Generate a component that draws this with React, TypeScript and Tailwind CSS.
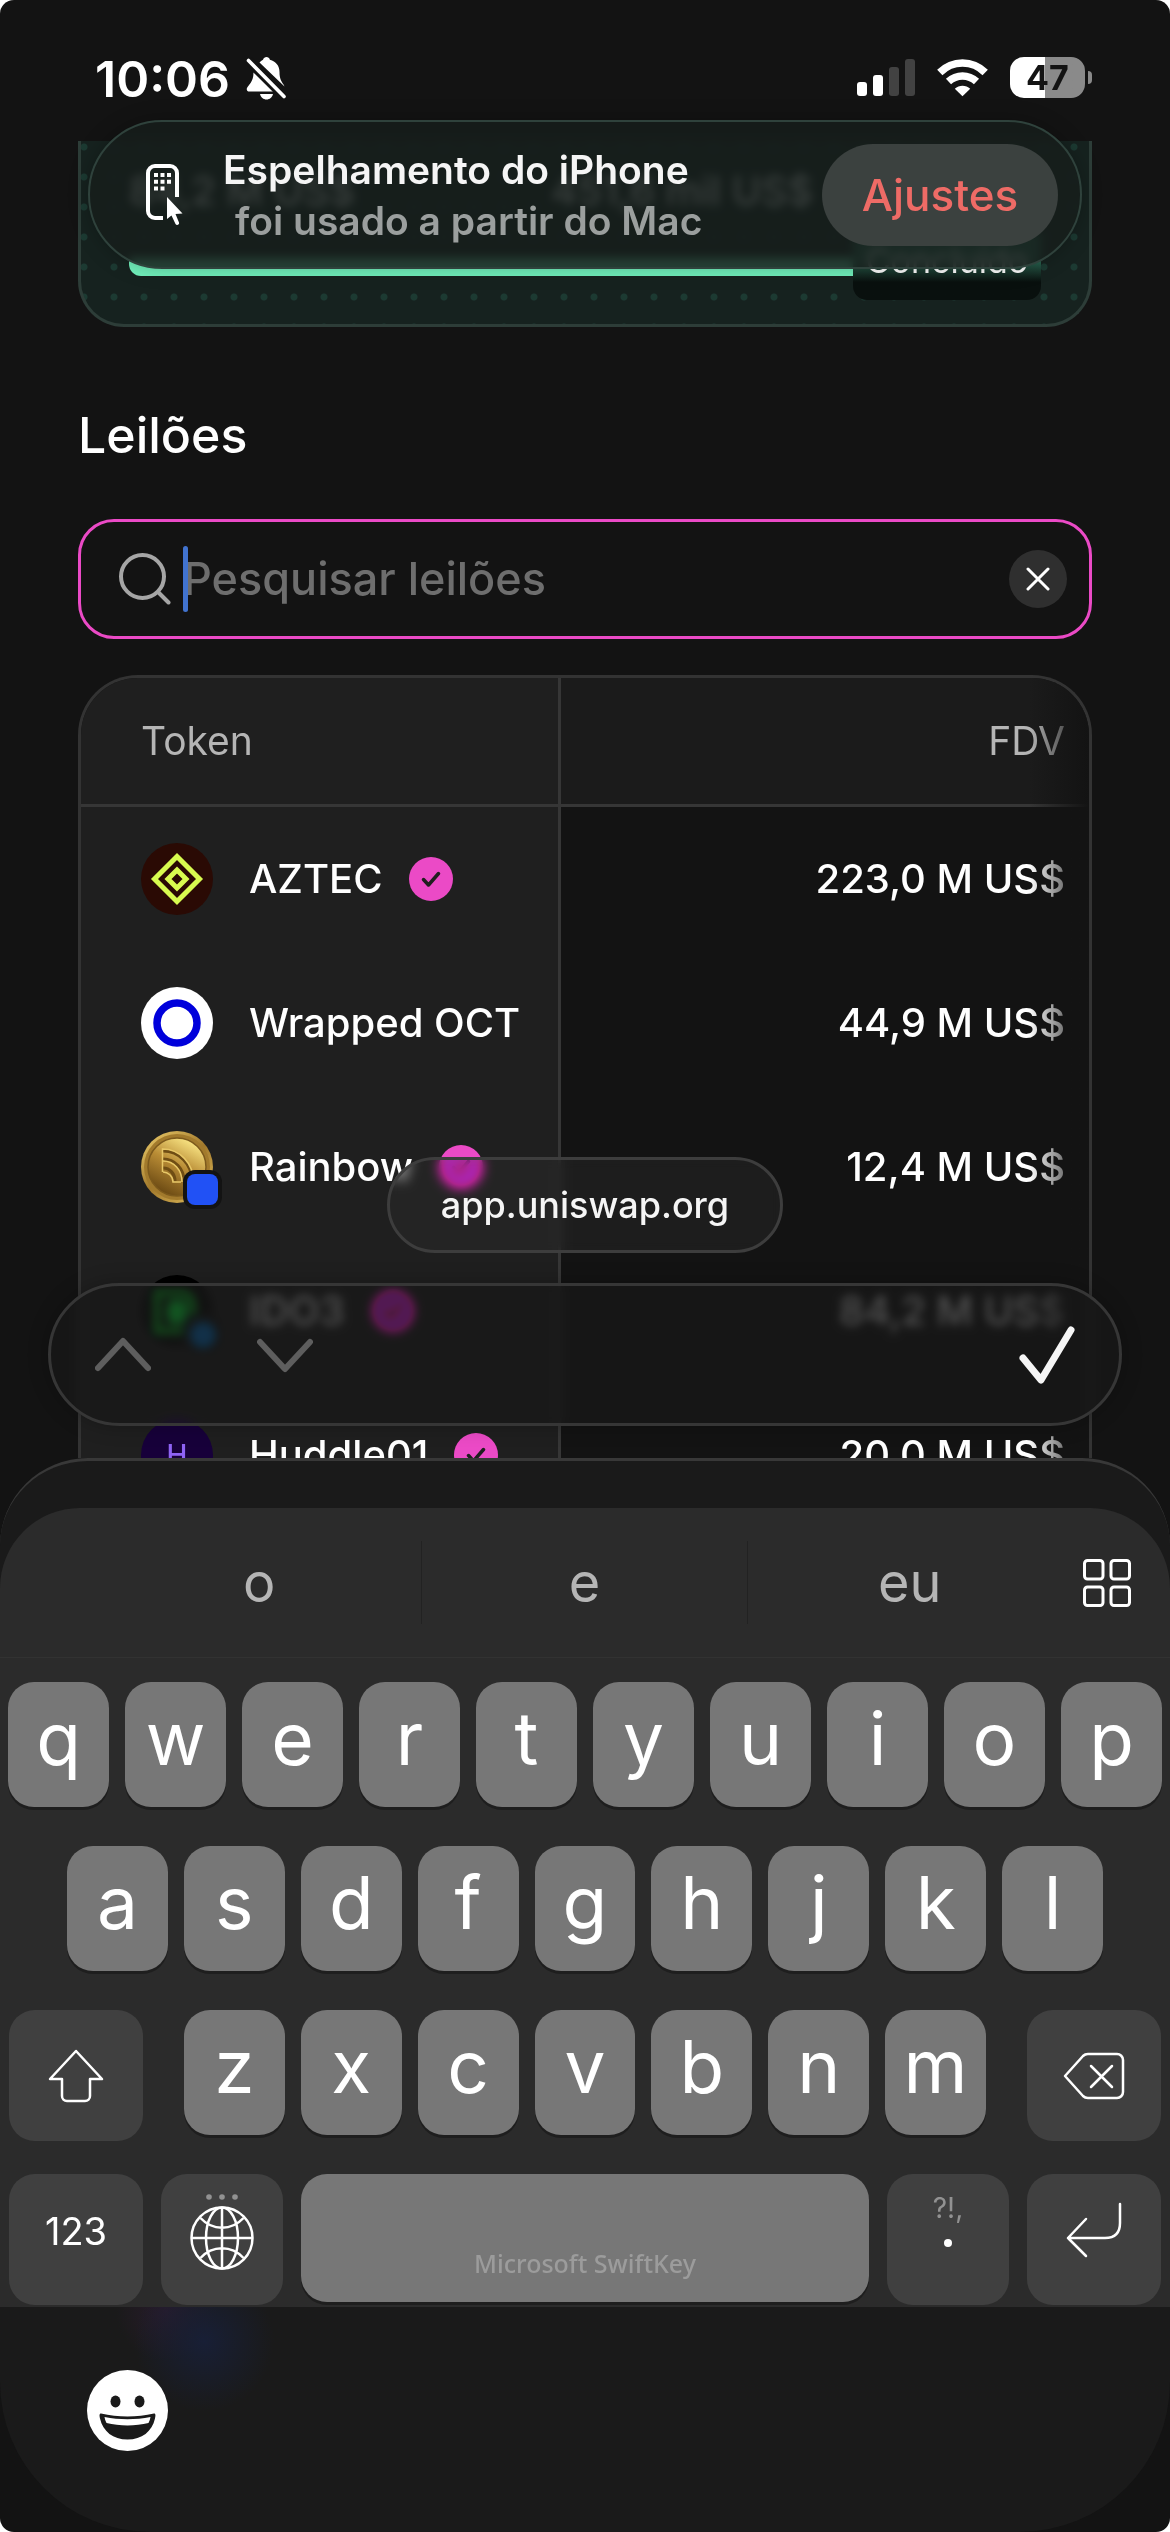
import React from "react";

type Token = {
  name: string;
  fdv: string;
  verified: boolean;
  logo: React.ReactNode;
};

const AztecLogo = () => (
  <svg viewBox="0 0 72 72" className="size-18">
    <circle cx="36" cy="36" r="36" fill="#2a0a04" />
    <path d="M36 13.5 58.5 36 36 58.500 13.500 36Z" fill="none" stroke="#d8fb4f" strokeWidth="5" />
    <path d="M36 27 45 36 36 45 27 36Z" fill="none" stroke="#d8fb4f" strokeWidth="5" />
  </svg>
);

const OctLogo = () => (
  <svg viewBox="0 0 72 72" className="size-18">
    <circle cx="36" cy="36" r="36" fill="#fff" />
    <circle cx="36" cy="36" r="20" fill="none" stroke="#0000db" strokeWidth="7.5" />
  </svg>
);

const RainbowLogo = () => (
  <svg viewBox="0 0 72 72" className="size-18 overflow-visible">
    <defs>
      <linearGradient id="coin" x1="0.75" y1="0.1" x2="0.3" y2="0.95">
        <stop offset="0" stopColor="#f3dc7c" />
        <stop offset="0.45" stopColor="#b98c35" />
        <stop offset="1" stopColor="#6e4c14" />
      </linearGradient>
      <linearGradient id="rim" x1="0.1" y1="0" x2="0.9" y2="1">
        <stop offset="0" stopColor="#e9c968" />
        <stop offset="0.5" stopColor="#a1782b" />
        <stop offset="1" stopColor="#e0bd5c" />
      </linearGradient>
    </defs>
    <circle cx="36" cy="36" r="36" fill="url(#rim)" />
    <circle cx="36" cy="36" r="33" fill="#a27a2c" />
    <circle cx="36" cy="36" r="29" fill="url(#coin)" stroke="#7d5a1c" strokeWidth="1.5" />
    <g fill="none" strokeWidth="3" stroke="#6f4d14">
      <path d="M22 20c16 0 29 13 29 30" />
      <path d="M22 28c12 0 21 10 21 22" />
      <path d="M22 37c7 0 12 6 12 13" />
    </g>
    <g fill="none" strokeWidth="1.500" stroke="#e8c868">
      <path d="M21.500 41V18c17 0 31 14 31 33" />
      <path d="M22 30c11 0 19 9 19 21" />
      <path d="M22 41c5 0 10 4 10 10h8" />
    </g>
    <rect x="42" y="39" width="39" height="39" rx="12" fill="#131313" />
    <rect x="46" y="43" width="31" height="31" rx="8" fill="#2151f5" />
  </svg>
);

const Ido3Logo = () => (
  <svg viewBox="0 0 72 72" className="size-18 overflow-visible">
    <circle cx="36" cy="36" r="36" fill="#000" />
    <path d="M16 18h22c12 0 14 6 14 18s-4 20-14 20H16Z" fill="none" stroke="#2fc463" strokeWidth="6" />
    <rect x="26" y="25" width="20" height="24" rx="6" fill="#3fdc78" />
    <rect x="42" y="39" width="39" height="39" rx="12" fill="#131313" />
    <circle cx="62" cy="60" r="13" fill="#2e6f9e" />
  </svg>
);

const HuddleLogo = () => (
  <div className="flex size-18 items-center justify-center rounded-full bg-[#17003a] text-[28px] font-medium text-[#8f63f5]">
    H
  </div>
);

const tokens: Token[] = [
  { name: "AZTEC", fdv: "223,0 M US$", verified: true, logo: <AztecLogo /> },
  { name: "Wrapped OCT", fdv: "44,9 M US$", verified: false, logo: <OctLogo /> },
  { name: "Rainbow", fdv: "12,4 M US$", verified: true, logo: <RainbowLogo /> },
  { name: "IDO3", fdv: "84,2 M US$", verified: true, logo: <Ido3Logo /> },
  { name: "Huddle01", fdv: "20,0 M US$", verified: true, logo: <HuddleLogo /> },
];

const VerifiedBadge = () => (
  <svg viewBox="0 0 44 44" className="size-11 shrink-0" role="img" aria-label="Verificado">
    <circle cx="22" cy="22" r="22" fill="#eb4ac6" />
    <path d="m14.500 22.500 5 5.500 10-11.500" fill="none" stroke="#1f1f1f" strokeWidth="3.500" strokeLinecap="round" strokeLinejoin="round" />
  </svg>
);

function StatusBar() {
  return (
    <header className="flex h-[141px] shrink-0 items-start justify-between pt-[57px] pr-[78px] pl-[95px]">
      <div className="flex items-center gap-4">
        <time className="text-[50px] leading-[42px] font-semibold">10:06</time>
        <svg viewBox="0 0 40 44" className="h-11 w-10" fill="#fff" aria-label="Silencioso">
          <path d="M13.500 5.500C15 3.800 16 3.300 17 2.800 17.500 1 19 0 20.500 0s3 1 3.400 2.800c6 1.500 9.600 6.200 9.600 12.200 0 7 2 9.500 4 12.500l1 2Z" />
          <path d="M7.500 15.500 27 34.500H3.500C1.500 34.500.5 33.500.8 31.500 2 28 7.500 25.500 7.500 15.500Z" />
          <path d="M14 37h13c-.8 3.300-3.300 5.500-6.500 5.500S14.800 40.300 14 37Z" />
          <path d="M2.500 3.500 38 39.500" stroke="#131313" strokeWidth="9" />
          <path d="M2.500 3.500 38 39.500" stroke="#fff" strokeWidth="3.600" strokeLinecap="round" />
        </svg>
      </div>
      <div className="flex items-center gap-[22px]">
        <svg viewBox="0 0 58 38" className="h-[38px] w-[58px]" aria-label="Sinal">
          <rect x="0" y="23" width="10" height="14" rx="3" fill="#fff" />
          <rect x="16" y="16" width="10" height="21" rx="3" fill="#fff" />
          <rect x="32" y="8" width="10" height="29" rx="3" fill="#424242" />
          <rect x="48" y="0" width="10" height="37" rx="3" fill="#424242" />
        </svg>
        <svg viewBox="0 0 51 38" className="h-[38px] w-[51px]" fill="none" stroke="#fff" strokeWidth="7.500" aria-label="Wi-Fi">
          <path d="M2.800 13.500C15.500.8 35.500.8 48.200 13.500" />
          <path d="M11.500 22.500c8-7.500 20-7.500 28 0" />
          <path d="M25.500 37.300 17.800 29.800c4.200-4 11.200-4 15.400 0Z" fill="#fff" stroke="none" />
        </svg>
        <div className="flex items-center gap-[3px]">
          <div className="flex h-[41px] w-[75px] items-center justify-center rounded-[14px] bg-linear-to-r from-white from-47% to-[#8a8a8a] to-47% text-[34px] font-bold text-[#131313]">
            47
          </div>
          <div className="h-[13px] w-1 rounded-r-full bg-[#8a8a8a]" />
        </div>
      </div>
    </header>
  );
}

function Banner() {
  return (
    <aside className="absolute inset-x-[88px] top-[120px] flex h-[149px] items-center rounded-full border-2 border-[#2f423c] bg-[#161d1b]/85 pr-[22px] pl-14 shadow-[0_0_20px_rgba(0,0,0,0.25)] backdrop-blur-[5px]">
      <svg viewBox="0 0 38 62" className="h-[62px] w-[38px]" fill="none" aria-hidden="true">
        <path d="M31 33V9a7 7 0 0 0-7-7H9a7 7 0 0 0-7 7v38a7 7 0 0 0 7 7h8" stroke="#fff" strokeWidth="4" />
        <g fill="#fff">
          <path d="M8 9h4v4H8zM14.500 9h4v4h-4zM21 9h4v4h-4zM8 15.700h4v4H8zM14.500 15.700h4v4h-4zM21 15.700h4v4h-4zM8 22.400h4v4H8zM14.500 22.400h4v4h-4z" />
          <path d="M21 33v22l4.500-3.500 4 8.500c1 2 4.300.8 3.500-1.500l-3.500-8.500 7-.5Z" />
        </g>
      </svg>
      <div className="ml-[39px] flex-1 text-[39px] leading-[51px] font-semibold whitespace-nowrap">
        <p className="text-[#f5f5f5]">Espelhamento do iPhone</p>
        <p className="pl-3 text-[#9b9f9e]">foi usado a partir do Mac</p>
      </div>
      <button type="button" className="h-[102px] w-[236px] shrink-0 rounded-full bg-[#3b413f] text-[44px] font-medium text-[#ee6b66]">
        Ajustes
      </button>
    </aside>
  );
}

function FeaturedCard() {
  return (
    <section className="relative h-[186px] overflow-hidden rounded-b-[46px] border-x-3 border-b-3 border-[#2d3d38] bg-[#16221f] bg-[radial-gradient(circle,#1c3a32_3px,transparent_4px)] bg-[length:30px_30px] bg-[position:-12px_-9px] px-12">
      <div className="flex h-[100px] items-center text-[40px] font-medium text-white">
        <span className="w-[422px]">84,2 M US$</span>
        <span>451,6 mil US$</span>
      </div>
      <div className="mt-[17px] h-[18px] rounded-bl-xl bg-[#72f2bd]" />
      <div className="absolute right-12 bottom-6 flex h-[72px] w-[188px] items-center justify-center rounded-[14px] bg-linear-to-b from-[#2a6a55] from-45% to-[#09100e] to-75% pb-2 text-[34px] text-white">
        Concluído
      </div>
    </section>
  );
}

function SearchBox() {
  return (
    <div className="relative mt-[54px] flex h-[120px] items-center rounded-[36px] border-3 border-[#eb4ac6] pr-[22px] pl-[38px]">
      <svg viewBox="0 0 52 52" className="size-[52px] shrink-0" fill="none" stroke="#a6a6a6" strokeWidth="4" strokeLinecap="round" aria-hidden="true">
        <circle cx="23.500" cy="23.500" r="21.500" />
        <path d="m39.500 39.500 10 10" />
      </svg>
      <label htmlFor="busca" className="sr-only">Pesquisar leilões</label>
      <input
        id="busca"
        type="text"
        placeholder="Pesquisar leilões"
        className="ml-3 min-w-0 flex-1 bg-transparent text-[45px] font-medium text-white outline-none placeholder:text-[#6e6e6e]"
      />
      <span className="absolute left-[102px] h-[66px] w-[5px] rounded-full bg-[#4173cf]" />
      <button type="button" aria-label="Limpar" className="flex size-[58px] items-center justify-center rounded-full bg-[#2f2f2f]">
        <svg viewBox="0 0 24 24" className="size-6" stroke="#fff" strokeWidth="3" strokeLinecap="round">
          <path d="m2 2 20 20M22 2 2 22" />
        </svg>
      </button>
    </div>
  );
}

function AuctionTable() {
  return (
    <div className="relative mt-9 overflow-hidden rounded-t-[60px] border-3 border-b-0 border-[#333333]">
      <table className="w-full border-separate border-spacing-0 text-[40px]">
        <thead>
          <tr className="h-[129px] text-[39px] text-[#b5b5b5]">
            <th scope="col" className="w-[480px] border-r-3 border-b-3 border-[#363636] bg-[#1f1f1f] pl-15 text-left font-normal">
              Token
            </th>
            <th scope="col" className="border-b-3 border-[#363636] bg-[#1b1b1b] pr-6 text-right font-normal">
              FDV
            </th>
          </tr>
        </thead>
        <tbody>
          {tokens.map((t) => (
            <tr key={t.name} className="h-36 font-medium text-white">
              <td className="border-r-3 border-[#363636] bg-[#1f1f1f] pl-15">
                <div className="flex items-center">
                  {t.logo}
                  <span className="mr-[26px] ml-9 whitespace-nowrap">{t.name}</span>
                  {t.verified && <VerifiedBadge />}
                </div>
              </td>
              <td className="pr-6 text-right">{t.fdv}</td>
            </tr>
          ))}
        </tbody>
      </table>
      <div className="pointer-events-none absolute inset-y-0 right-0 w-15 bg-linear-to-r from-transparent to-[#131313]" />
    </div>
  );
}

function FormAssistant() {
  return (
    <>
      <div className="absolute bottom-[205px] left-1/2 flex h-24 w-[396px] -translate-x-1/2 items-center justify-center rounded-full border-3 border-[#3d3d3d] bg-[#2d2d2d]/40 text-[36px] text-[#f5f5f5] backdrop-blur-[6px] backdrop-saturate-200">
        <a href="#app" className="font-medium">app.uniswap.org</a>
      </div>
      <div className="absolute inset-x-12 bottom-8 flex h-[143px] items-center rounded-full border-3 border-[#363636] bg-[#181818]/75 px-11 shadow-[0_0_20px_rgba(0,0,0,0.25)] backdrop-blur-[5px] backdrop-saturate-200">
        <button type="button" aria-label="Campo anterior">
          <svg viewBox="0 0 56 36" className="h-9 w-14" fill="none" stroke="#5e5e5e" strokeWidth="6" strokeLinecap="round" strokeLinejoin="round">
            <path d="M3 31 28 4l25 27" />
          </svg>
        </button>
        <button type="button" aria-label="Próximo campo" className="ml-[106px]">
          <svg viewBox="0 0 56 36" className="h-9 w-14" fill="none" stroke="#5e5e5e" strokeWidth="6" strokeLinecap="round" strokeLinejoin="round">
            <path d="m3 5 25 27L53 5" />
          </svg>
        </button>
        <button type="button" aria-label="Concluir" className="ml-auto">
          <svg viewBox="0 0 56 58" className="h-[58px] w-14" fill="none" stroke="#f5f5f5" strokeWidth="7" strokeLinecap="round" strokeLinejoin="round">
            <path d="m4 32 18 22L52 4" />
          </svg>
        </button>
      </div>
    </>
  );
}

const Key = ({ children }: { children: string }) => (
  <button
    type="button"
    className="flex h-[125px] min-w-0 flex-1 items-center justify-center rounded-[26px] bg-[#777777] pb-3 text-[73px] leading-none text-white shadow-[0_3px_0_#1e1e1e]"
  >
    {children}
  </button>
);

const SideKey = ({ label, children }: { label: string; children: React.ReactNode }) => (
  <button
    type="button"
    aria-label={label}
    className="flex h-[131px] w-[134px] shrink-0 items-center justify-center rounded-[26px] bg-[#404040] text-[38px] text-white"
  >
    {children}
  </button>
);

function Keyboard() {
  return (
    <section className="flex shrink-0 flex-col overflow-hidden rounded-t-[88px] rounded-b-[150px] border-t-3 border-[#383838] bg-[#1a1a1a] pt-[47px]">
      <div className="rounded-t-[80px] bg-[#2b2b2b] pb-[2px]">
        <div className="flex h-[150px] items-center border-b border-[#323232] pl-[97px] text-[54px] text-[#b5b5b5]">
          <button type="button" className="h-[83px] flex-1 border-r border-[#222222] leading-none">o</button>
          <button type="button" className="h-[83px] flex-1 border-r border-[#222222] leading-none">e</button>
          <button type="button" className="h-[83px] flex-1 leading-none">eu</button>
          <button type="button" aria-label="Ferramentas" className="mr-[39px] ml-[11px]">
            <svg viewBox="0 0 48 48" className="size-12" fill="none" stroke="#fff" strokeWidth="3">
              <rect x="1.500" y="1.500" width="18.500" height="18.500" rx="3" />
              <rect x="28" y="1.500" width="18.500" height="18.500" rx="3" />
              <rect x="1.500" y="28" width="18.500" height="18.500" rx="3" />
              <rect x="28" y="28" width="18.500" height="18.500" rx="3" />
            </svg>
          </button>
        </div>
        <div className="flex flex-col gap-[39px] pt-6">
          <div className="flex gap-4 px-2">
            {"qwertyuiop".split("").map((k) => <Key key={k}>{k}</Key>)}
          </div>
          <div className="flex gap-4 px-[67px]">
            {"asdfghjkl".split("").map((k) => <Key key={k}>{k}</Key>)}
          </div>
          <div className="flex h-[125px] items-start px-[9px]">
            <SideKey label="Maiúsculas">
              <svg viewBox="0 0 56 54" className="h-[54px] w-14" fill="none" stroke="#fff" strokeWidth="2.500" strokeLinejoin="round">
                <path d="M28 2 54 30H42v17a5 5 0 0 1-5 5H19a5 5 0 0 1-5-5V30H2Z" />
              </svg>
            </SideKey>
            <div className="mx-[41px] flex flex-1 gap-4">
              {"zxcvbnm".split("").map((k) => <Key key={k}>{k}</Key>)}
            </div>
            <SideKey label="Apagar">
              <svg viewBox="0 0 62 48" className="h-12 w-[62px]" fill="none" stroke="#fff" strokeWidth="2.500" strokeLinecap="round" strokeLinejoin="round">
                <path d="M25 2h29a6 6 0 0 1 6 6v32a6 6 0 0 1-6 6H25a7 7 0 0 1-5-2L2 24 20 4a7 7 0 0 1 5-2ZM28 14l21 21M49 14 28 35" />
              </svg>
            </SideKey>
          </div>
          <div className="flex items-start gap-[18px] px-[9px]">
            <SideKey label="Números">
              <span className="pb-4">123</span>
            </SideKey>
            <button type="button" aria-label="Idioma" className="flex h-[131px] w-[122px] shrink-0 flex-col items-center gap-[6px] rounded-[26px] bg-[#404040] pt-5">
              <svg viewBox="0 0 32 6" className="h-[6px] w-8" fill="#929292">
                <circle cx="3" cy="3" r="2.800" />
                <circle cx="16" cy="3" r="2.800" />
                <circle cx="29" cy="3" r="2.800" />
              </svg>
              <svg viewBox="0 0 64 64" className="size-16" fill="none" stroke="#fff" strokeWidth="2.500">
                <circle cx="32" cy="32" r="30.500" />
                <ellipse cx="32" cy="32" rx="16" ry="30.500" />
                <path d="M32 1v62M1 32h62M10.500 12c12 13 31 13 43 0M10.500 52c12-13 31-13 43 0" />
              </svg>
            </button>
            <button type="button" className="flex h-32 flex-1 items-end justify-center rounded-[26px] bg-[#777777] pb-[20px] font-['Noto_Sans','Open_Sans',sans-serif] text-[25px] font-medium text-[#9c9c9c] shadow-[0_3px_0_#1e1e1e]">
              Microsoft SwiftKey
            </button>
            <button type="button" aria-label="Pontuação" className="flex h-[131px] w-[122px] shrink-0 flex-col items-center rounded-[26px] bg-[#404040] pt-4 text-[28px] leading-[36px] text-[#929292]">
              ?!,
              <span className="mt-[13px] size-2 rounded-full bg-white" />
            </button>
            <SideKey label="Retorno">
              <span className="pb-5">
                <svg viewBox="0 0 56 56" className="size-14" fill="none" stroke="#fff" strokeWidth="2.500" strokeLinecap="round" strokeLinejoin="round">
                  <path d="M54 2v19c0 10-5 15-15 15H2M20 17 2 36l18 18" />
                </svg>
              </span>
            </SideKey>
          </div>
        </div>
      </div>
      <div className="h-[225px] bg-[radial-gradient(circle_at_204px_34px,#181f36_0px,transparent_70px),radial-gradient(circle_at_166px_4px,#281b2b_0px,transparent_50px)] pt-[63px] pl-[87px]">
        <button type="button" aria-label="Emoji" className="size-[81px]">
          <svg viewBox="0 0 81 81" className="size-[81px]">
            <circle cx="40.500" cy="40.500" r="40.500" fill="#fff" />
            <ellipse cx="28.500" cy="31.500" rx="5" ry="6" fill="#1a1a1a" />
            <ellipse cx="52.500" cy="31.500" rx="5" ry="6" fill="#1a1a1a" />
            <path d="M14 43.500c17 4 36 4 53 0 2 0 1.500 2.500 1 5-3 13-13 21-27.500 21S16 61.500 13 48.500c-.5-2.500-1-5 1-5Z" fill="#1a1a1a" />
            <path d="M17.500 47c15 3 31 3 46 0-.3 2-.9 4-2 6-13 3.300-29 3.300-42 0-1.100-2-1.700-4-2-6Z" fill="#fff" />
          </svg>
        </button>
      </div>
    </section>
  );
}

export default function App() {
  return (
    <div className="h-screen bg-white font-['Inter',sans-serif] text-white">
      <div className="relative flex h-full flex-col overflow-hidden rounded-[14px] bg-[#131313]">
        <StatusBar />
        <div className="relative min-h-0 flex-1">
          <main className="h-full overflow-hidden px-[78px]">
            <FeaturedCard />
            <h1 className="mt-[78px] text-[50px] leading-[60px] font-medium">Leilões</h1>
            <SearchBox />
            <AuctionTable />
          </main>
          <FormAssistant />
        </div>
        <Keyboard />
        <Banner />
      </div>
    </div>
  );
}
